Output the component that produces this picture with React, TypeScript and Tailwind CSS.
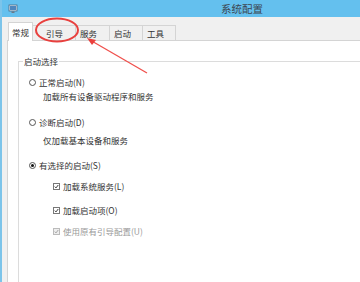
import React from "react";

const font = { fontFamily: '"Noto Sans CJK SC", "Noto Sans", sans-serif' };

function Radio({ checked }: { checked?: boolean }) {
  return (
    <span className="flex h-[7px] w-[7px] items-center justify-center rounded-full border border-[#555] bg-white">
      {checked && <span className="h-[3px] w-[3px] rounded-full bg-[#111]" />}
    </span>
  );
}

function Check({ disabled }: { disabled?: boolean }) {
  return (
    <span className={`flex h-[7px] w-[7px] items-center justify-center border ${disabled ? "border-[#bbb] bg-[#eee]" : "border-[#777] bg-white"}`}>
      <svg viewBox="0 0 8 8" className="h-[7px] w-[7px]">
        <path d="M1.2 4.2 L3.2 6.2 L6.8 1.6" fill="none" stroke={disabled ? "#999" : "#222"} strokeWidth="1.4" />
      </svg>
    </span>
  );
}

export default function App() {
  const tabs = [
    { label: "引导", w: "w-[43px]", pl: "pl-[13px]" },
    { label: "服务", w: "w-[34px]", pl: "pl-[4px]" },
    { label: "启动", w: "w-[33px]", pl: "pl-[4px]" },
    { label: "工具", w: "w-[33px]", pl: "pl-[4px]" },
  ];

  return (
    <div style={font} className="relative flex h-[282px] w-[360px] flex-col overflow-hidden border-l-2 border-[#7cc4ea] bg-[#f0f0f0] text-[8.5px] leading-[12px] text-[#333]">
      {/* title bar */}
      <div className="flex h-[17px] shrink-0 items-center bg-[#64c0ee]">
        <svg viewBox="0 0 10 10" className="ml-[6px] h-[10px] w-[10px]">
          <rect x="1" y="1" width="8" height="6" fill="#dfe9f2" stroke="#4a6a86" strokeWidth="0.8" />
          <rect x="2" y="2" width="6" height="4" fill="#4f86bd" />
          <rect x="3.5" y="7.4" width="3" height="1.6" fill="#6b7a88" />
        </svg>
        <span className="ml-[203px] text-[10.5px] text-[#3c4650]">系统配置</span>
      </div>

      {/* tab strip */}
      <div className="flex h-[23px] shrink-0 items-end pl-[6px]">
        <div className="relative z-10 -mb-px flex h-[19px] w-[25px] items-center justify-center border border-b-0 border-[#d4d4d4] bg-white pb-[1px]">
          常规
        </div>
        {tabs.map((t) => (
          <div key={t.label} className={`flex h-[15px] items-center border border-b-0 border-l-0 border-[#d4d4d4] bg-[#f0f0f0] ${t.w} ${t.pl}`}>
            {t.label}
          </div>
        ))}
      </div>

      {/* panel */}
      <div className="ml-[5px] flex-1 border-l border-t border-[#d4d4d4] bg-white pl-[10px] pt-[20px]">
        <div className="relative h-full border-l border-t border-[#dcdcdc] pl-[10px] pt-[14px]">
          <span className="absolute left-[4px] top-[-7px] bg-white px-[1px]">启动选择</span>

          <div className="flex items-center gap-[3px]">
            <Radio />
            <span>正常启动(N)</span>
          </div>
          <div className="mt-[2px] pl-[14px]">加载所有设备驱动程序和服务</div>

          <div className="mt-[14px] flex items-center gap-[3px]">
            <Radio />
            <span>诊断启动(D)</span>
          </div>
          <div className="mt-[6px] pl-[14px]">仅加载基本设备和服务</div>

          <div className="mt-[13px] flex items-center gap-[3px]">
            <Radio checked />
            <span>有选择的启动(S)</span>
          </div>

          <div className="pl-[24px]">
            <div className="mt-[9px] flex items-center gap-[3px]">
              <Check />
              <span>加载系统服务(L)</span>
            </div>
            <div className="mt-[12px] flex items-center gap-[3px]">
              <Check />
              <span>加载启动项(O)</span>
            </div>
            <div className="mt-[9px] flex items-center gap-[3px] text-[#9a9a9a]">
              <Check disabled />
              <span>使用原有引导配置(U)</span>
            </div>
          </div>
        </div>
      </div>

      {/* red annotation */}
      <svg className="pointer-events-none absolute left-[-2px] top-0 h-[282px] w-[360px]" viewBox="0 0 360 282">
        <ellipse cx="57" cy="30" rx="21" ry="11.5" fill="none" stroke="#e8403e" strokeWidth="2" />
        <line x1="147" y1="73" x2="90" y2="40" stroke="#f0504c" strokeWidth="1.3" />
        <path d="M87 38 L96 40 L92 45 Z" fill="#ea3f3c" />
      </svg>
    </div>
  );
}
